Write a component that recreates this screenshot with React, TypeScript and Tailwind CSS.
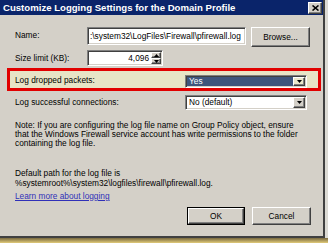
import React from "react";

const face = "font-['Liberation_Sans',Arial,sans-serif]";

function Sunken({ className = "", children }: { className?: string; children?: React.ReactNode }) {
  return (
    <div
      className={`border border-t-[#808080] border-l-[#808080] border-b-white border-r-white shadow-[inset_1px_1px_0_#404040,inset_-1px_-1px_0_#d4d0c8] ${className}`}
    >
      {children}
    </div>
  );
}

function Raised({ className = "", children }: { className?: string; children?: React.ReactNode }) {
  return (
    <div
      className={`flex items-center justify-center border border-t-white border-l-white border-b-[#404040] border-r-[#404040] shadow-[inset_-1px_-1px_0_#808080] ${className}`}
    >
      {children}
    </div>
  );
}

function Arrow({ up = false }: { up?: boolean }) {
  return (
    <svg width="5" height="3" viewBox="0 0 5 3">
      <polygon points={up ? "0,3 5,3 2.5,0" : "0,0 5,0 2.5,3"} fill="#000" />
    </svg>
  );
}

function Combo({
  value,
  selected = false,
  className = "",
  btnClass = "bg-[#d4d0c8]",
}: {
  value: string;
  selected?: boolean;
  className?: string;
  btnClass?: string;
}) {
  return (
    <Sunken className={`flex bg-white p-[1px] ${className}`}>
      <div
        className={`flex-1 flex items-center pl-[2px] ${
          selected ? "bg-[#3e557c] text-white" : "text-black"
        }`}
      >
        {value}
      </div>
      <Raised className={`w-[12px] ${btnClass}`}>
        <Arrow />
      </Raised>
    </Sunken>
  );
}

export default function App() {
  return (
    <div className={`w-[328px] h-[243px] bg-[#dcdad4] flex flex-col ${face} text-[8.3px] leading-[9px] text-black overflow-hidden`}>
      {/* window */}
      <div className="w-[325px] h-[238px] bg-[#d4d0c8] flex flex-col border-r-2 border-b-2 border-r-[#404040] border-b-[#404040]">
        {/* title bar */}
        <div className="h-[15px] bg-[#0a246a] flex items-center justify-between pl-[3px] pr-[1px]">
          <span className="text-white font-bold text-[9.6px] leading-[11px]">
            Customize Logging Settings for the Domain Profile
          </span>
          <Raised className="w-[14px] h-[12px] bg-[#d4d0c8]">
            <svg width="7" height="6" viewBox="0 0 7 6">
              <path d="M0.5 0.5 L6.5 5.5 M6.5 0.5 L0.5 5.5" stroke="#000" strokeWidth="1.6" />
            </svg>
          </Raised>
        </div>

        {/* Name */}
        <div className="mt-[12px] h-[20px] flex items-start">
          <div className="w-[87px] pl-[15px] pt-[4px]">Name:</div>
          <Sunken className="w-[159px] h-[18px] bg-white flex items-center pl-[2px] overflow-hidden whitespace-nowrap">
            :\system32\LogFiles\Firewall\pfirewall.log
          </Sunken>
          <Raised className="ml-[5px] w-[59px] h-[20px] bg-[#d4d0c8]">Browse...</Raised>
        </div>

        {/* Size limit */}
        <div className="mt-[3px] h-[16px] flex items-center">
          <div className="w-[87px] pl-[15px]">Size limit (KB):</div>
          <Sunken className="w-[76px] h-[16px] bg-white flex p-[1px]">
            <div className="flex-1 flex items-center justify-end pr-[2px]">4,096</div>
            <div className="w-[10px] flex flex-col">
              <Raised className="flex-1 bg-[#d4d0c8]">
                <Arrow up />
              </Raised>
              <Raised className="flex-1 bg-[#d4d0c8]">
                <Arrow />
              </Raised>
            </div>
          </Sunken>
        </div>

        {/* Highlighted row */}
        <div className="mt-[2px] ml-[7px] w-[314px] h-[23px] border-[3px] border-[#e10000] bg-[#e7e4c6] flex items-start">
          <div className="w-[175px] pl-[5px] pt-[5px]">Log dropped packets:</div>
          <Combo value="Yes" selected className="mt-[4px] w-[122px] h-[13px]" btnClass="bg-[#ebe8cb]" />
        </div>

        {/* Successful connections */}
        <div className="mt-[4px] h-[15px] flex items-center">
          <div className="w-[185px] pl-[15px]">Log successful connections:</div>
          <Combo value="No (default)" className="w-[122px] h-[15px]" />
        </div>

        {/* Note */}
        <p className="mt-[11px] pl-[15px] whitespace-nowrap">
          Note: If you are configuring the log file name on Group Policy object, ensure
          <br />
          that the Windows Firewall service account has write permissions to the folder
          <br />
          containing the log file.
        </p>
        <p className="mt-[20px] pl-[15px] leading-[10px] whitespace-nowrap">
          Default path for the log file is
          <br />
          %systemroot%\system32\logfiles\firewall\pfirewall.log.
        </p>
        <a className="mt-[4px] ml-[15px] self-start text-[#3030b8] underline">Learn more about logging</a>

        {/* Buttons */}
        <div className="mt-[6px] flex justify-end pr-[12px] gap-[7px]">
          <div className="border border-black">
            <Raised className="w-[56px] h-[16px] bg-[#d4d0c8]">OK</Raised>
          </div>
          <Raised className="w-[59px] h-[18px] bg-[#d4d0c8]">Cancel</Raised>
        </div>
      </div>
      {/* drop shadow */}
      <div className="flex-1 bg-gradient-to-b from-[#7a6a40] to-[#e2cc7a]" />
    </div>
  );
}
